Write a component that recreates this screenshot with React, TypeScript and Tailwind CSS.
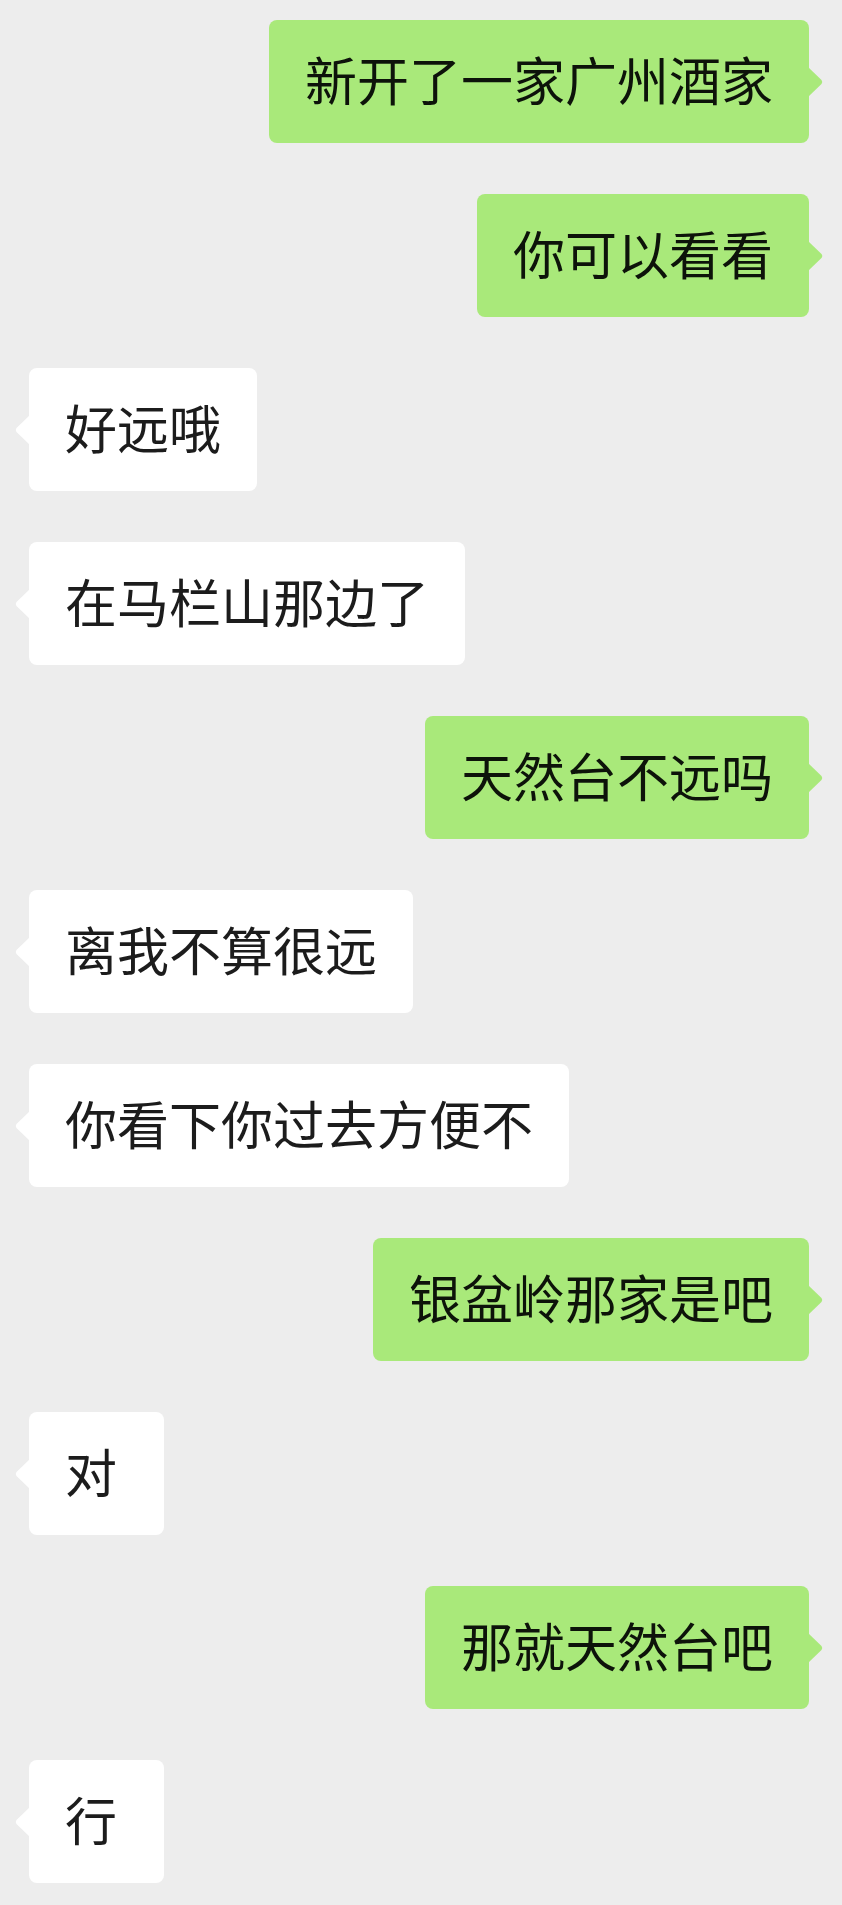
const messages = [
  { id: 1, mine: true, text: "新开了一家广州酒家" },
  { id: 2, mine: true, text: "你可以看看" },
  { id: 3, mine: false, text: "好远哦" },
  { id: 4, mine: false, text: "在马栏山那边了" },
  { id: 5, mine: true, text: "天然台不远吗" },
  { id: 6, mine: false, text: "离我不算很远" },
  { id: 7, mine: false, text: "你看下你过去方便不" },
  { id: 8, mine: true, text: "银盆岭那家是吧" },
  { id: 9, mine: false, text: "对" },
  { id: 10, mine: true, text: "那就天然台吧" },
  { id: 11, mine: false, text: "行" },
];

const Tail = ({ mine }: { mine: boolean }) => (
  <svg
    width="16"
    height="30"
    viewBox="0 0 16 30"
    className={
      mine
        ? "absolute top-1/2 -translate-y-1/2 right-[-15px]"
        : "absolute top-1/2 -translate-y-1/2 left-[-15px]"
    }
  >
    {mine ? (
      <path d="M0 0 L13.5 13 Q15 15 13.5 17 L0 30 Z" fill="#a9e97a" />
    ) : (
      <path d="M16 0 L2.5 13 Q1 15 2.5 17 L16 30 Z" fill="#ffffff" />
    )}
  </svg>
);

const Bubble = ({ mine, text }: { mine: boolean; text: string }) => (
  <div className={mine ? "flex justify-end pr-[33px]" : "flex justify-start pl-[29px]"}>
    <div
      className={
        mine
          ? "relative rounded-[8px] bg-[#a9e97a] text-[#0d130a] px-[36px] pt-[22px] pb-[28px] min-w-[135px]"
          : "relative rounded-[8px] bg-white text-[#1c1c1c] px-[36px] pt-[22px] pb-[28px] min-w-[135px]"
      }
    >
      <Tail mine={mine} />
      <span className="block text-[52px] leading-[73px] whitespace-nowrap">{text}</span>
    </div>
  </div>
);

export default function App() {
  return (
    <div
      className="min-h-screen w-full bg-[#ededed] pt-[20px] pb-[22px] flex flex-col gap-[51px]"
      style={{ fontFamily: '"Noto Sans CJK SC", "Noto Sans", sans-serif' }}
    >
      {messages.map((m) => (
        <Bubble key={m.id} mine={m.mine} text={m.text} />
      ))}
    </div>
  );
}
